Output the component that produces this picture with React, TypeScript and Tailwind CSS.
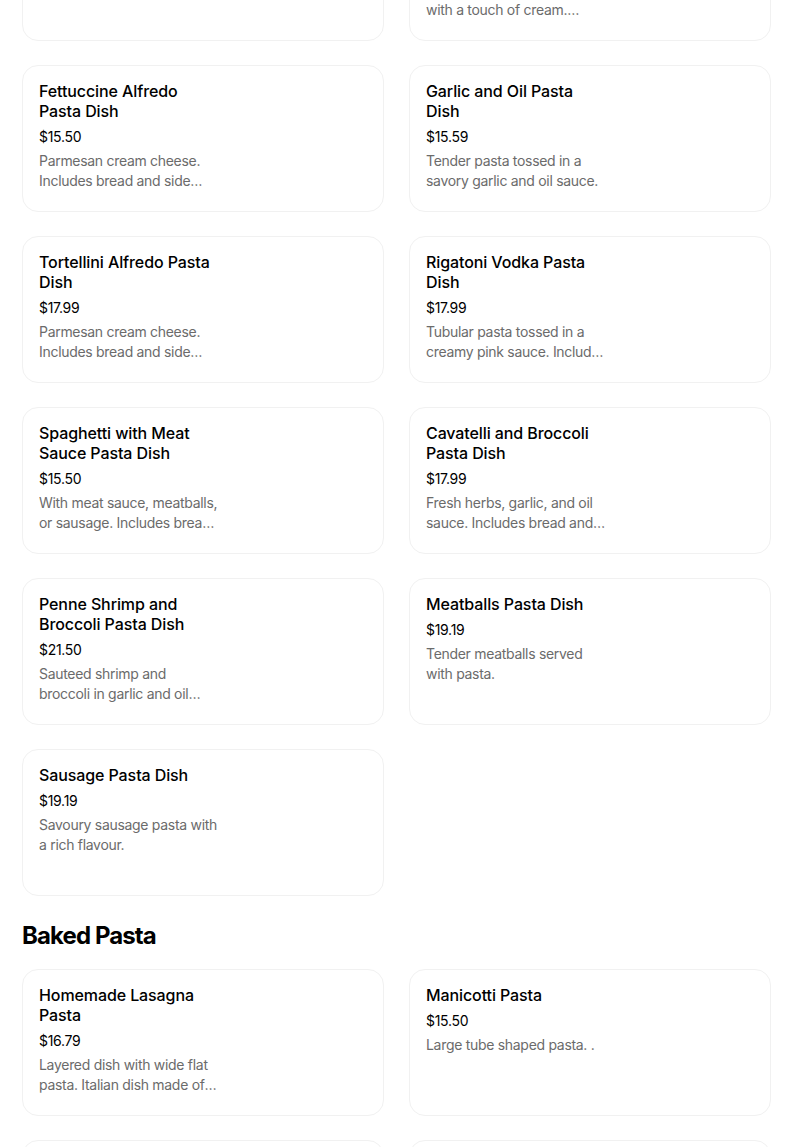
type Item = {
  name: string;
  price: string;
  description: string;
};

const pastaDishes: Item[] = [
  {
    name: 'Baked Ziti Pasta Dish',
    price: '$15.50',
    description: 'Baked with ricotta.',
  },
  {
    name: 'Penne alla Vodka Pasta Dish',
    price: '$17.99',
    description: 'Creamy pink vodka sauce with a touch of cream. Accompanied by bread and side salad.',
  },
  {
    name: 'Fettuccine Alfredo Pasta Dish',
    price: '$15.50',
    description: 'Parmesan cream cheese. Includes bread and side salad.',
  },
  {
    name: 'Garlic and Oil Pasta Dish',
    price: '$15.59',
    description: 'Tender pasta tossed in a savory garlic and oil sauce.',
  },
  {
    name: 'Tortellini Alfredo Pasta Dish',
    price: '$17.99',
    description: 'Parmesan cream cheese. Includes bread and side salad.',
  },
  {
    name: 'Rigatoni Vodka Pasta Dish',
    price: '$17.99',
    description: 'Tubular pasta tossed in a creamy pink sauce. Includes bread and side salad.',
  },
  {
    name: 'Spaghetti with Meat Sauce Pasta Dish',
    price: '$15.50',
    description: 'With meat sauce, meatballs, or sausage. Includes bread and side salad.',
  },
  {
    name: 'Cavatelli and Broccoli Pasta Dish',
    price: '$17.99',
    description: 'Fresh herbs, garlic, and oil sauce. Includes bread and side salad.',
  },
  {
    name: 'Penne Shrimp and Broccoli Pasta Dish',
    price: '$21.50',
    description: 'Sauteed shrimp and broccoli in garlic and oil sauce.',
  },
  {
    name: 'Meatballs Pasta Dish',
    price: '$19.19',
    description: 'Tender meatballs served with pasta.',
  },
  {
    name: 'Sausage Pasta Dish',
    price: '$19.19',
    description: 'Savoury sausage pasta with a rich flavour.',
  },
];

const bakedPasta: Item[] = [
  {
    name: 'Homemade Lasagna Pasta',
    price: '$16.79',
    description: 'Layered dish with wide flat pasta. Italian dish made of stacked layers of pasta.',
  },
  {
    name: 'Manicotti Pasta',
    price: '$15.50',
    description: 'Large tube shaped pasta. .',
  },
  {
    name: 'Stuffed Shells Pasta',
    price: '$15.50',
    description: 'Jumbo shells filled with ricotta.',
  },
  {
    name: 'Eggplant Parmigiana Pasta',
    price: '$16.79',
    description: 'Breaded eggplant baked with marinara.',
  },
];

function MenuCard({ name, price, description }: Item) {
  return (
    <div className="h-[147px] rounded-2xl border border-[#f1f1f1] bg-white px-4 pt-[15px]">
      <h3 className="w-[176px] text-[16px] leading-5 font-medium text-black line-clamp-2 tracking-[-0.1px]">{name}</h3>
      <div className="mt-[6px] text-[14px] leading-5 text-black tracking-[-0.3px]">{price}</div>
      <p className="mt-1 w-[181px] text-[14px] leading-5 text-[#6b6b6b] line-clamp-2 tracking-[-0.3px]">{description}</p>
    </div>
  );
}

export default function App() {
  return (
    <div
      className="min-h-screen overflow-hidden bg-white"
      style={{ fontFamily: 'Inter, "Noto Sans", sans-serif' }}
    >
      <div className="w-[804px] pl-[22px] pr-[33px] mt-[-106px]">
        <div className="grid grid-cols-2 gap-x-[25px] gap-y-6">
          {pastaDishes.map((item) => (
            <MenuCard key={item.name} {...item} />
          ))}
        </div>
        <h2 className="mt-6 mb-[17px] text-[24px] leading-8 font-bold text-black tracking-[-0.9px]">
          Baked Pasta
        </h2>
        <div className="grid grid-cols-2 gap-x-[25px] gap-y-6">
          {bakedPasta.map((item) => (
            <MenuCard key={item.name} {...item} />
          ))}
        </div>
      </div>
    </div>
  );
}
